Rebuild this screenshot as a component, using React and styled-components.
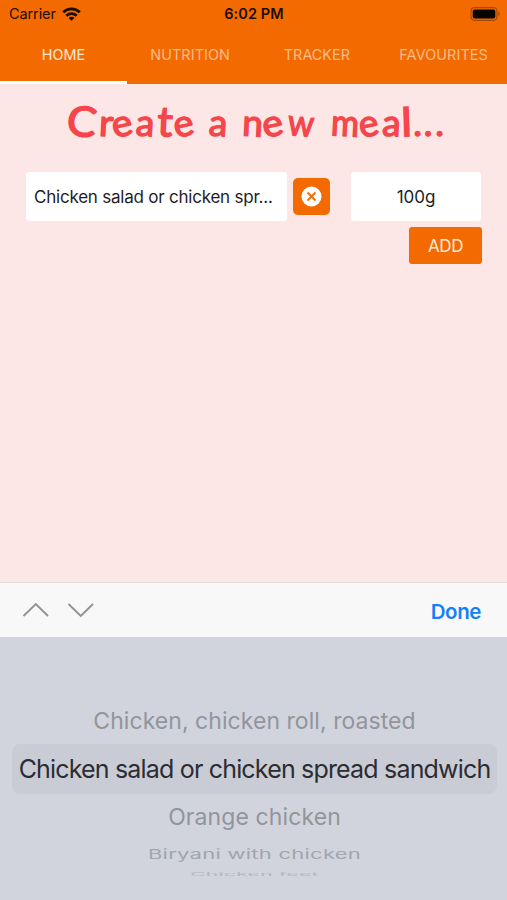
import React, { useState } from 'react';
import styled, { createGlobalStyle } from 'styled-components';

const GlobalStyle = createGlobalStyle`
  * {
    box-sizing: border-box;
  }
  body {
    margin: 0;
    font-family: Inter, 'Liberation Sans', sans-serif;
  }
  button {
    border: none;
    padding: 0;
    font-family: inherit;
  }
`;

const Screen = styled.div`
  display: flex;
  flex-direction: column;
  width: 507px;
  height: 900px;
  overflow: hidden;
  background-color: #fde6e6;
`;

const Header = styled.header`
  height: 84px;
  background-color: #f36b00;
`;

const StatusBar = styled.div`
  display: grid;
  grid-template-columns: 1fr auto 1fr;
  align-items: center;
  height: 27px;
  padding: 0 6px 0 9px;
  color: #1c0d00;
`;

const Carrier = styled.div`
  display: flex;
  align-items: center;
  gap: 6px;
  font-size: 14.5px;
  letter-spacing: -0.1px;
`;

const Clock = styled.div`
  margin-right: 2px;
  font-size: 14.5px;
  font-weight: 600;
  letter-spacing: 0.1px;
`;

const Battery = styled.svg`
  justify-self: end;
`;

const Tabs = styled.nav`
  display: grid;
  grid-template-columns: repeat(4, 1fr);
  height: 57px;
`;

const Tab = styled.button`
  height: 57px;
  background: none;
  border-bottom: 3px solid ${({ active }) => (active ? '#ffffff' : 'transparent')};
  color: ${({ active }) => (active ? '#ffe9d8' : '#fbbb87')};
  font-size: 14.4px;
  letter-spacing: ${({ spacing }) => spacing}px;
  white-space: nowrap;
`;

const Content = styled.main`
  flex: 1;
  padding: 0 26px;
`;

const Title = styled.h1`
  display: flex;
  height: 88px;
  margin: 0;
  padding: 14px 0 0 36px;
  color: #f4464b;
  font-family: Lato, sans-serif;
  font-size: 37px;
  font-weight: 400;
  line-height: 48px;
  -webkit-text-stroke: 1.4px #f4464b;
  stroke-linejoin: round;
`;

const Word = styled.span`
  display: flex;
  flex: none;
  margin-right: ${({ gap }) => gap}px;
`;

const Letter = styled.span`
  display: flex;
  flex: none;
  justify-content: center;
  width: ${({ width }) => width}px;
  transform: rotate(${({ tilt }) => tilt || 0}deg)
    scale(${({ stretch }) => stretch || 1}, ${({ tall }) => tall || 1});
`;

const FormRow = styled.div`
  display: flex;
  align-items: center;
`;

const Field = styled.div`
  width: ${({ width }) => width}px;
  height: 49px;
  padding: 0 8px;
  border-radius: 3px;
  background-color: #ffffff;
  color: #1d1d1f;
  font-size: 17px;
  letter-spacing: ${({ spacing }) => spacing}px;
  line-height: 50px;
  text-align: ${({ align }) => align || 'left'};
  white-space: nowrap;
`;

const ClearButton = styled.button`
  display: flex;
  align-items: center;
  justify-content: center;
  width: 37px;
  height: 37px;
  margin: 0 21.5px 0 6px;
  border-radius: 5px;
  background-color: #f36b00;
`;

const AddButton = styled.button`
  display: block;
  width: 73px;
  height: 37px;
  margin: 6px -1px 0 auto;
  border-radius: 3px;
  background-color: #f36b00;
  color: #ffe9d8;
  font-size: 17px;
  letter-spacing: -0.4px;
`;

const Toolbar = styled.div`
  display: flex;
  align-items: center;
  justify-content: space-between;
  height: 55px;
  padding: 0 26px 0 22px;
  border-top: 1px solid #e4dcdc;
  background-color: #f8f8f8;
`;

const Arrows = styled.div`
  display: flex;
  gap: 17px;
`;

const DoneButton = styled.button`
  padding-top: 3px;
  background: none;
  color: #1680f5;
  font-size: 20.5px;
  font-weight: 600;
  letter-spacing: -0.4px;
`;

const Picker = styled.div`
  height: 263px;
  padding: 59px 10px 0 12px;
  background-color: #d1d4dc;
`;

const Option = styled.div`
  display: flex;
  align-items: center;
  justify-content: center;
  height: ${({ height }) => height}px;
  border-radius: 8px;
  background-color: ${({ selected }) => (selected ? '#c9ccd4' : 'transparent')};
  color: ${({ color }) => color};
  font-size: ${({ size }) => size}px;
  letter-spacing: ${({ spacing }) => spacing}px;
  white-space: nowrap;
`;

const OptionLabel = styled.span`
  transform: translateY(${({ shift }) => shift || 0}px) scaleY(${({ squash }) => squash || 1});
`;

const TABS = [
  { label: 'HOME', spacing: 0 },
  { label: 'NUTRITION', spacing: 0.1 },
  { label: 'TRACKER', spacing: 0 },
  { label: 'FAVOURITES', spacing: 0.1 }
];

// hand-lettered title: each letter has its own cell width and tilt
const WORDS = [
  {
    gap: 12,
    letters: [
      { char: 'C', width: 36, tilt: 7, stretch: 1.18, tall: 1.12 },
      { char: 'r', width: 15, tilt: 3, stretch: 1.05 },
      { char: 'e', width: 22, tilt: -12, stretch: 1.05 },
      { char: 'a', width: 19, tilt: 4 },
      { char: 't', width: 21, tilt: 3, stretch: 1.15, tall: 1.12 },
      { char: 'e', width: 21, tilt: -12, stretch: 1.02 }
    ]
  },
  { gap: 14, letters: [{ char: 'a', width: 19, tilt: 4 }] },
  {
    gap: 15,
    letters: [
      { char: 'n', width: 22, tilt: 3 },
      { char: 'e', width: 23, tilt: -12, stretch: 1.05 },
      { char: 'w', width: 28, tilt: 5, stretch: 0.9 }
    ]
  },
  {
    gap: 0,
    letters: [
      { char: 'm', width: 31, tilt: 3, stretch: 0.92 },
      { char: 'e', width: 21, tilt: -12 },
      { char: 'a', width: 20, tilt: 3 },
      { char: 'l', width: 12, tilt: -2, stretch: 1.2, tall: 1.06 },
      { char: '.', width: 9 },
      { char: '.', width: 12 },
      { char: '.', width: 11 }
    ]
  }
];

const OPTIONS = [
  {
    label: 'Chicken, chicken roll, roasted',
    height: 48,
    size: 23,
    spacing: 0.05,
    shift: 1,
    color: '#92959b'
  },
  {
    label: 'Chicken salad or chicken spread sandwich',
    height: 50,
    size: 25,
    spacing: -0.82,
    color: '#2b2d33',
    selected: true
  },
  { label: 'Orange chicken', height: 45, size: 23, spacing: 0.1, color: '#92959b' },
  {
    label: 'Biryani with chicken',
    height: 29,
    size: 22,
    spacing: 0.25,
    squash: 0.62,
    color: '#a2a5ab'
  },
  {
    label: 'Chicken feet',
    height: 12,
    size: 21,
    spacing: 0.3,
    squash: 0.2,
    color: '#b3b6bd'
  }
];

const WifiIcon = () => (
  <svg width="19" height="14" viewBox="0 0 19 14" fill="none" stroke="#1c0d00" strokeWidth="2.7">
    <path d="M1.2 5.3C5.8.7 13.2.7 17.8 5.3" />
    <path d="M4.3 8.7c2.9-2.8 7.5-2.8 10.4 0" />
    <path d="M9.5 13.8 6.6 10.9c1.6-1.5 4.2-1.5 5.8 0z" fill="#1c0d00" stroke="none" />
  </svg>
);

const BatteryIcon = () => (
  <Battery width="31" height="14" viewBox="0 0 31 14">
    <rect x="1" y=".7" width="26" height="12.6" rx="3.5" fill="none" stroke="#a44a05" strokeWidth="1.2" />
    <rect x="2.7" y="2.4" width="22.6" height="9.2" rx="2" fill="#080300" />
    <path d="M28.4 4.8c1.8.5 1.8 3.9 0 4.4z" fill="#a44a05" />
  </Battery>
);

const ClearIcon = () => (
  <svg width="21" height="21" viewBox="0 0 21 21">
    <circle cx="10.5" cy="10.5" r="10" fill="#ffffff" />
    <path d="m6.5 6.5 8 8m0-8-8 8" stroke="#f36b00" strokeWidth="1.8" />
  </svg>
);

const Chevron = ({ d }) => (
  <svg width="28" height="18" viewBox="0 0 28 18" fill="none" stroke="#929294" strokeWidth="1.9">
    <path d={d} />
  </svg>
);

const App = () => {
  const [active, setActive] = useState('HOME');
  const [selected, setSelected] = useState('Chicken salad or chicken spread sandwich');

  return (
    <>
      <GlobalStyle />
      <Screen>
        <Header>
          <StatusBar>
            <Carrier>
              Carrier
              <WifiIcon />
            </Carrier>
            <Clock>6:02 PM</Clock>
            <BatteryIcon />
          </StatusBar>
          <Tabs>
            {TABS.map(({ label, spacing }) => (
              <Tab
                key={label}
                active={active === label}
                spacing={spacing}
                onClick={() => setActive(label)}
              >
                {label}
              </Tab>
            ))}
          </Tabs>
        </Header>
        <Content>
          <Title>
            {WORDS.map(({ gap, letters }, i) => (
              <Word key={i} gap={gap}>
                {letters.map(({ char, ...letter }, j) => (
                  <Letter key={j} {...letter}>
                    {char}
                  </Letter>
                ))}
              </Word>
            ))}
          </Title>
          <FormRow>
            <Field width={261} spacing={-0.22}>{`${selected.slice(0, 28)}...`}</Field>
            <ClearButton>
              <ClearIcon />
            </ClearButton>
            <Field width={130} spacing={0} align="center">
              100g
            </Field>
          </FormRow>
          <AddButton>ADD</AddButton>
        </Content>
        <Toolbar>
          <Arrows>
            <Chevron d="m1.5 15 12.3-12L26 15" />
            <Chevron d="m1.5 3 12.3 12L26 3" />
          </Arrows>
          <DoneButton>Done</DoneButton>
        </Toolbar>
        <Picker>
          {OPTIONS.map(({ label, squash, shift, ...option }) => (
            <Option key={label} {...option} onClick={() => setSelected(label)}>
              <OptionLabel squash={squash} shift={shift}>
                {label}
              </OptionLabel>
            </Option>
          ))}
        </Picker>
      </Screen>
    </>
  );
};

export default App;
